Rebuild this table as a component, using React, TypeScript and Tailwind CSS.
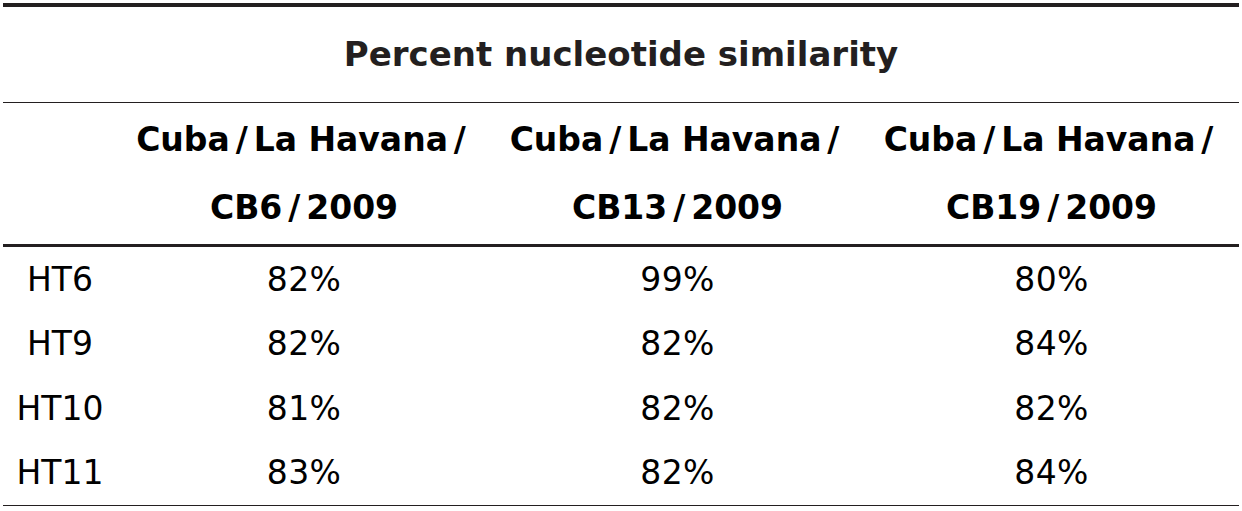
import React from 'react';

// ── Table data ───────────────────────────────────────────────────────────────
const STRAINS = ['CB6/2009', 'CB13/2009', 'CB19/2009'];

const ROWS: { label: string; values: string[] }[] = [
  { label: 'HT6',  values: ['82%', '99%', '80%'] },
  { label: 'HT9',  values: ['82%', '82%', '84%'] },
  { label: 'HT10', values: ['81%', '82%', '82%'] },
  { label: 'HT11', values: ['83%', '82%', '84%'] },
];

const COLS = 'grid grid-cols-[114px_374px_373px_375px]';

function Slash() {
  // Verdana's slash is wide; DejaVu's is narrow, so pad it a little
  return <span className="mx-[0.18em]">/</span>;
}

export default function App() {
  return (
    <div
      className="w-[1242px] h-[511px] bg-white px-[3px] pt-[3px]"
      style={{ fontFamily: '"DejaVu Sans", Verdana, sans-serif' }}
    >
      <div className="w-[1236px]">
        {/* ── Title ─────────────────────────────────────────────── */}
        <div className="border-t-4 border-[#231f20] h-[99px] flex items-center justify-center">
          <span className="text-[34px] font-bold text-[#231f20]">
            Percent nucleotide similarity
          </span>
        </div>

        {/* ── Strain headers ────────────────────────────────────── */}
        <div className={`${COLS} border-t-[1.5px] border-[#231f20] pt-[3px] pb-[2px]`}>
          <div />
          {STRAINS.map(s => (
            <div key={s} className="text-center text-[33px] font-bold text-black leading-[68px]">
              <div>
                Cuba<Slash />La Havana<Slash />
              </div>
              <div>
                {s.split('/')[0]}<Slash />{s.split('/')[1]}
              </div>
            </div>
          ))}
        </div>

        {/* ── Values ────────────────────────────────────────────── */}
        <div className="border-t-[3px] border-[#231f20] border-b-[1.5px]">
          {ROWS.map(r => (
            <div key={r.label} className={`${COLS} h-[64.5px] items-center text-[33px] text-black`}>
              <div className="text-center">{r.label}</div>
              {r.values.map((v, i) => (
                <div key={i} className="text-center tracking-[0.01em]">{v}</div>
              ))}
            </div>
          ))}
        </div>
      </div>
    </div>
  );
}
